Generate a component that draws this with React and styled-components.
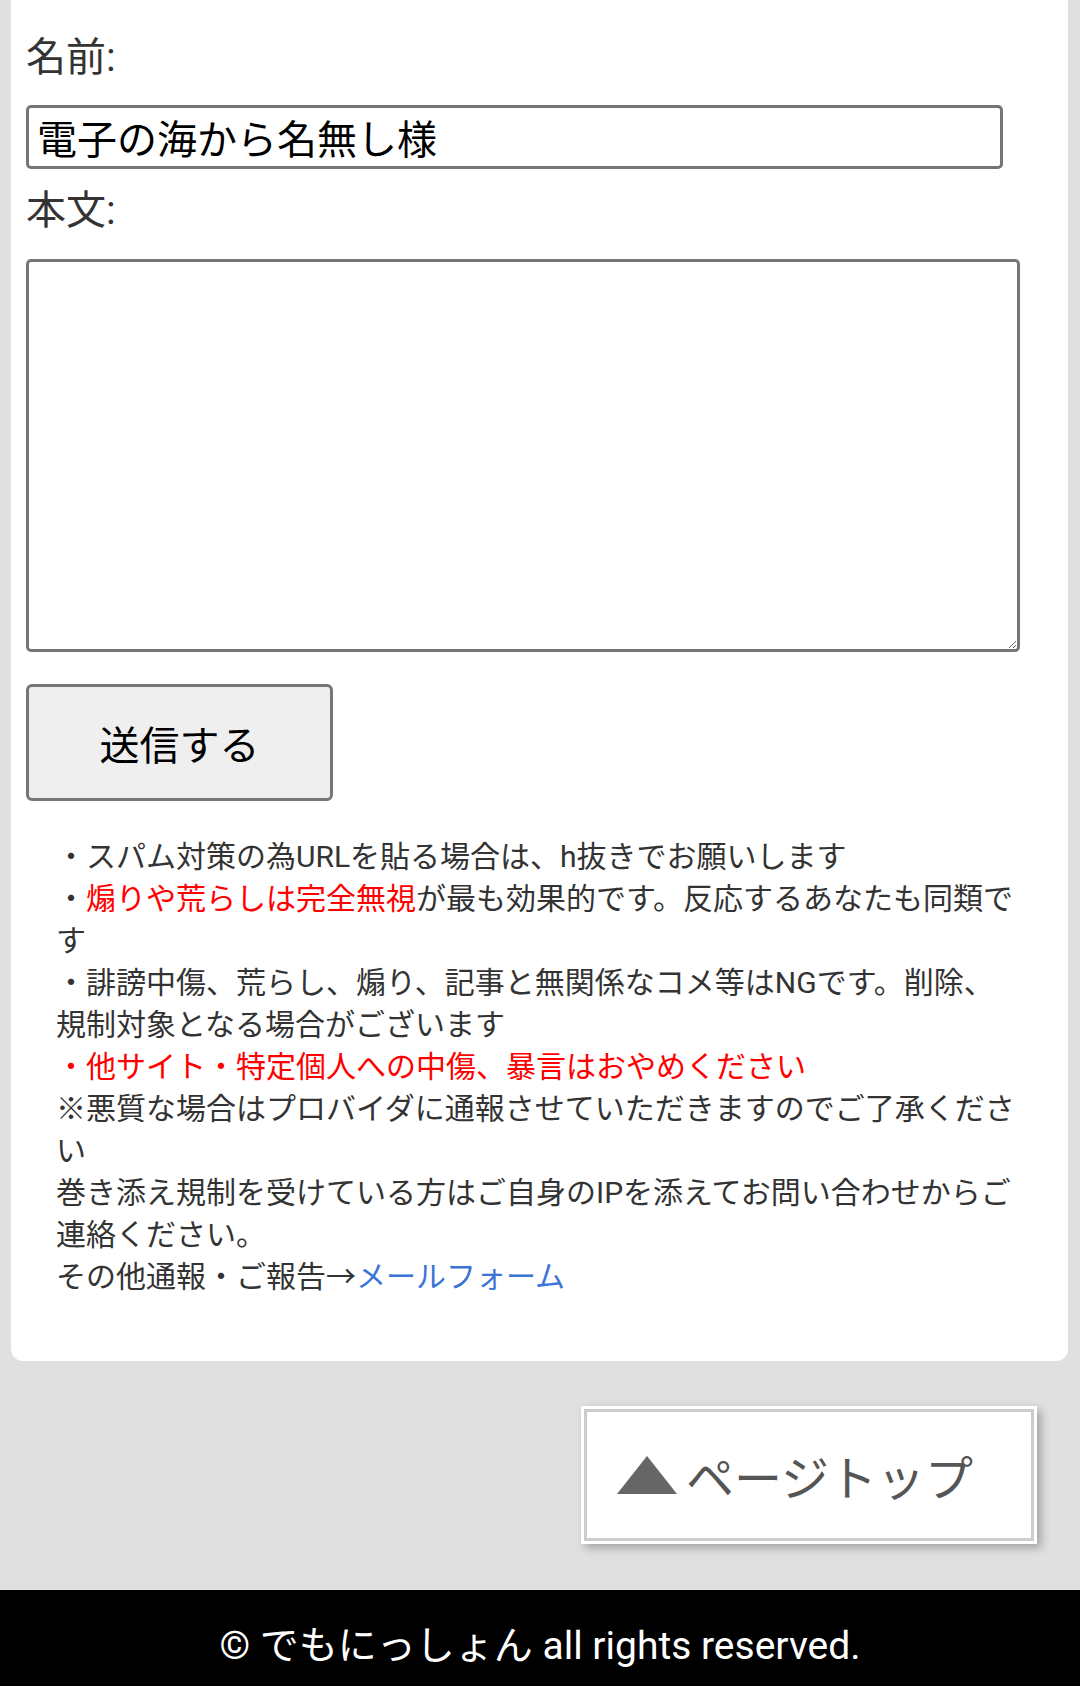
import React from 'react'
import styled, { createGlobalStyle } from 'styled-components'

const GlobalStyle = createGlobalStyle`
  body {
    margin: 0;
    background: #e0e0e0;
    font-family: Roboto, "Noto Sans CJK JP", sans-serif;
  }
`

const Card = styled.div`
  margin: 0 12px 0 11px;
  padding: 34px 15px 63px;
  background: #fff;
  border-radius: 0 0 12px 12px;
`

const Label = styled.label`
  display: block;
  margin-top: ${props => props.$top || 0}px;
  font-size: 40px;
  line-height: 48px;
  color: #333;
`

const NameInput = styled.input`
  display: block;
  box-sizing: border-box;
  margin-top: 23px;
  width: 977px;
  height: 64px;
  padding: 0 8px;
  border: 3px solid #767676;
  border-radius: 5px;
  font-family: inherit;
  font-size: 40px;
  color: #000;
  background: #fff;
`

const BodyArea = styled.textarea`
  display: block;
  box-sizing: border-box;
  margin-top: 24px;
  width: 994px;
  height: 393px;
  padding: 6px 10px;
  border: 3px solid #767676;
  border-radius: 5px;
  font-family: inherit;
  font-size: 30px;
  background: #fff;
`

const SubmitButton = styled.button`
  display: block;
  box-sizing: border-box;
  margin-top: 32px;
  width: 307px;
  height: 117px;
  border: 3px solid #767676;
  border-radius: 6px;
  background: #efefef;
  font-family: inherit;
  font-size: 40px;
  color: #000;
`

const Notes = styled.p`
  margin: 35px 0 0;
  padding-left: 30px;
  width: 966px;
  font-size: 30px;
  line-height: 42px;
  color: #333;
`

const Warn = styled.span`
  color: #ff0000;
`

const MailLink = styled.a`
  color: #3b74d6;
  text-decoration: none;
`

const TopRow = styled.div`
  display: flex;
  justify-content: flex-end;
  padding: 48px 46px 49px 0;
`

const PageTop = styled.a`
  display: flex;
  align-items: center;
  gap: 9px;
  box-sizing: border-box;
  width: 450px;
  height: 132px;
  padding-left: 30px;
  background: #fff;
  border: 3px solid #ccc;
  box-shadow: 0 0 0 3px #fff, 4px 4px 9px 3px rgba(0, 0, 0, 0.28);
  font-size: 48px;
  color: #555;
  text-decoration: none;
`

const Footer = styled.footer`
  box-sizing: border-box;
  height: 96px;
  padding-top: 32px;
  background: #000;
  color: #fff;
  text-align: center;
  font-size: 39px;
  line-height: 48px;
`

export default function App() {
  return (
    <>
      <GlobalStyle />
      <Card>
        <Label>名前:</Label>
        <NameInput defaultValue='電子の海から名無し様' />
        <Label $top={18}>本文:</Label>
        <BodyArea />
        <SubmitButton>送信する</SubmitButton>
        <Notes>
          ・スパム対策の為URLを貼る場合は、h抜きでお願いします<br />
          ・<Warn>煽りや荒らしは完全無視</Warn>が最も効果的です。反応するあなたも同類です<br />
          ・誹謗中傷、荒らし、煽り、記事と無関係なコメ等はNGです。削除、規制対象となる場合がございます<br />
          <Warn>・他サイト・特定個人への中傷、暴言はおやめください</Warn><br />
          ※悪質な場合はプロバイダに通報させていただきますのでご了承ください<br />
          巻き添え規制を受けている方はご自身のIPを添えてお問い合わせからご連絡ください。<br />
          その他通報・ご報告→<MailLink href='#'>メールフォーム</MailLink>
        </Notes>
      </Card>
      <TopRow>
        <PageTop href='#'>
          <svg width='60' height='38' viewBox='0 0 60 38'>
            <polygon points='30,0 60,38 0,38' fill='#666' />
          </svg>
          ページトップ
        </PageTop>
      </TopRow>
      <Footer>© でもにっしょん all rights reserved.</Footer>
    </>
  )
}
